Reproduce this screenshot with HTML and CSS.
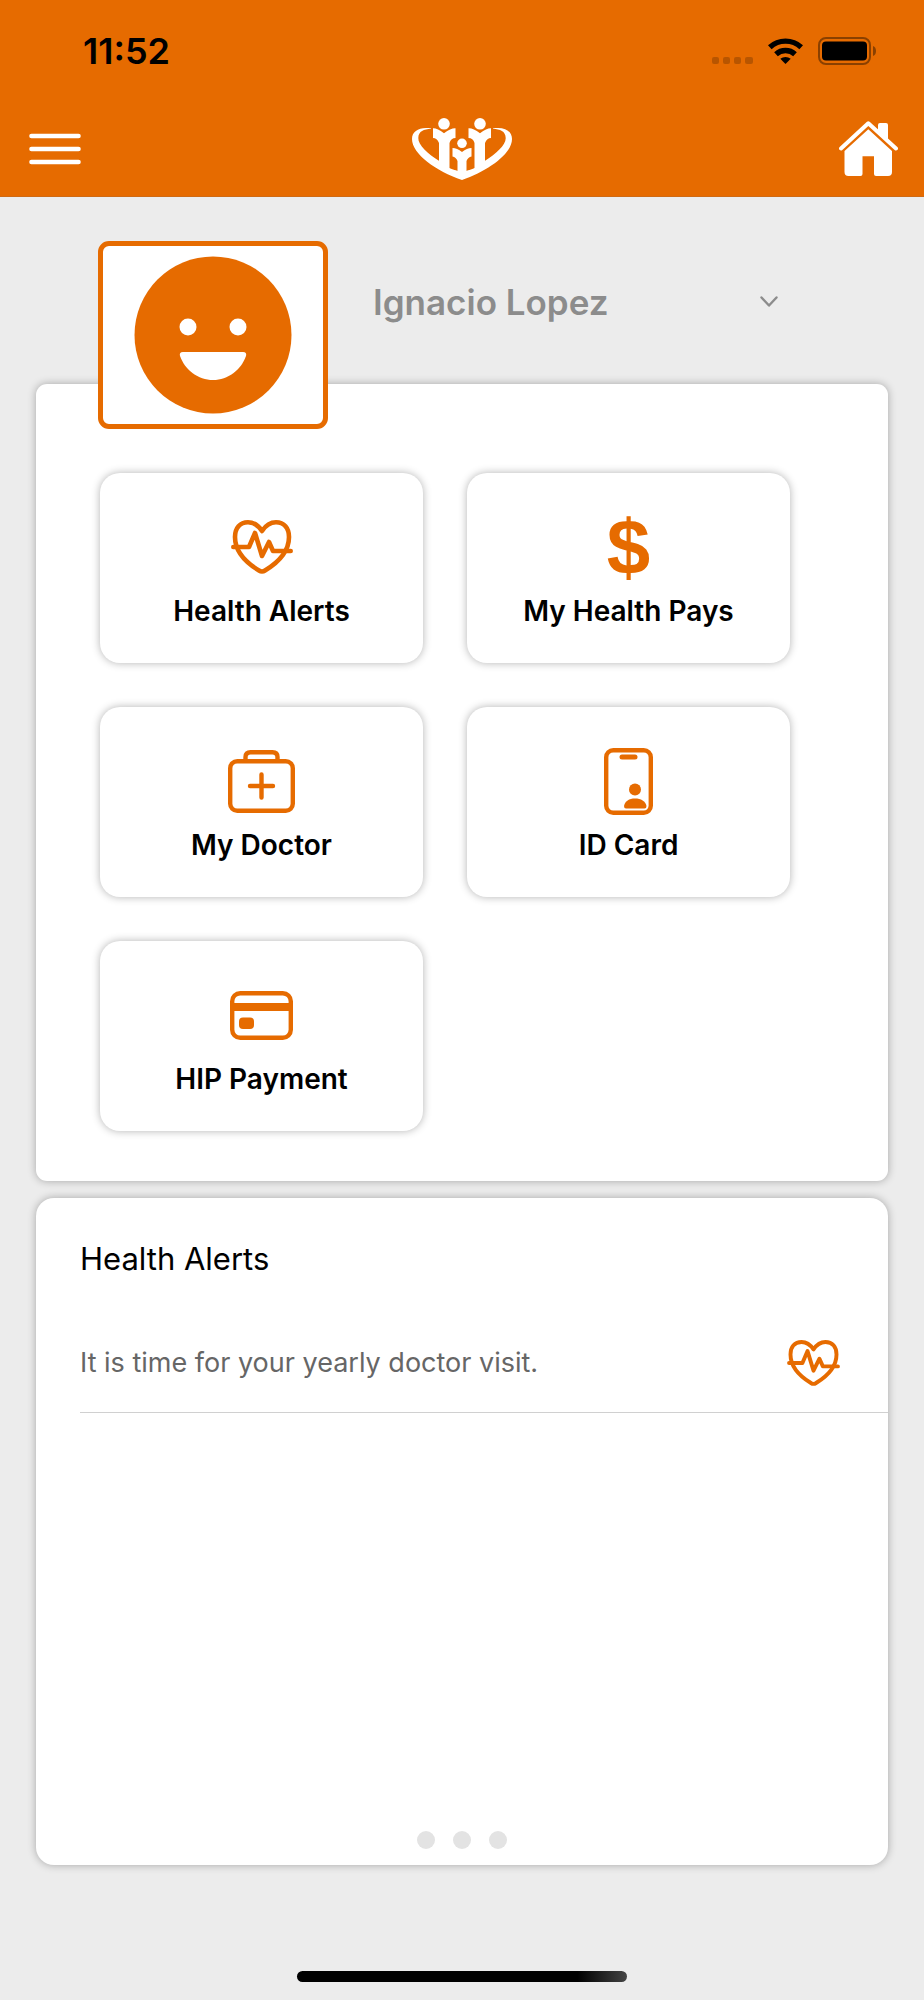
FILE: index.html
```html
<!DOCTYPE html>
<html lang="en">
<head>
<meta charset="utf-8" />
<meta name="viewport" content="width=device-width, initial-scale=1">
<title>Member Home</title>
<link rel="stylesheet" href="styles.css">
</head>

<body>
    <!-- icons that are used more than once -->
    <svg class="defs" width="0" height="0">
        <symbol id="heart" viewBox="0 0 62 54">
            <g fill="none" stroke="currentColor" stroke-width="4.6" stroke-linecap="round" stroke-linejoin="round">
                <path d="M31 11C27 5 22 2.300 17 2.300C9 2.300 4 8 4 17C4 31 14 42 28 50.500Q31 52.500 34 50.500C48 42 58 31 58 17C58 8 53 2.300 45 2.300C40 2.300 35 5 31 11Z"/>
                <path d="M2.300 27H18L24 13L31 36L38 22L42 31H59.700"/>
            </g>
        </symbol>
    </svg>

    <header class="header">
        <div class="status-bar">
            <span class="time">11:52</span>
            <div class="status-icons">
                <svg class="signal" width="41" height="8" viewBox="0 0 41 8">
                    <rect x="0" width="7" height="7" y="0" rx="2"/>
                    <rect x="11" width="7" height="7" y="0" rx="2"/>
                    <rect x="22" width="7" height="7" y="0" rx="2"/>
                    <rect x="33" width="8" height="7" y="0" rx="2"/>
                </svg>
                <svg width="35" height="26" viewBox="0 0 35 26">
                    <path d="M1.8 9.2A23.2 23.2 0 0 1 33.2 9.2M8 16.2A14 14 0 0 1 27 16.2" fill="none" stroke="#000" stroke-width="5.4"/>
                    <path d="M17.5 26L12.3 20.8A8 8 0 0 1 22.7 20.8Z"/>
                </svg>
                <svg width="58" height="28" viewBox="0 0 58 28">
                    <rect x="1" y="1" width="51" height="26" rx="7" fill="none" stroke="#000" stroke-opacity=".4" stroke-width="2"/>
                    <rect x="4" y="4.500" width="45" height="19" rx="4"/>
                    <path d="M55 9Q58 10 58 14T55 19Z" fill-opacity=".4"/>
                </svg>
            </div>
        </div>
        <nav class="nav">
            <button class="nav-button" aria-label="Menu">
                <svg width="55" height="32" viewBox="-3 0 55 32" stroke="#fff" stroke-width="4.6" stroke-linecap="round">
                    <path d="M2.5 3H49.5M2.5 16H49.5M2.5 29H49.5"/>
                </svg>
            </button>
            <svg class="logo" width="100" height="62" viewBox="0 0 100 62" fill="#fff">
                <g id="half">
                    <path d="M19 10.3C8 8.5 0 12.5 0 21C0 36 24 53 50 62V53.5C44 53 36 51 27.3 43C16 36 6 27 6.3 20C6.5 13 12 11.4 19 10.8Z"/>
                    <circle cx="32" cy="5.8" r="5.8"/>
                    <path d="M21 10.3Q25 10 32 15.2Q39 10 43.5 10.3V20Q39 20 37.5 25V52L27 46V25Q25 20 21 20Z"/>
                </g>
                <use href="#half" transform="matrix(-1 0 0 1 100 0)"/>
                <path d="M40.5 30Q45 30 50 34Q55 30 59.5 30V38.500Q56 39 54.5 43V55H45.5V43Q44 39 40.5 38.500Z"/>
                <circle cx="50" cy="25.3" r="4.8"/>
                <path d="M32 50L45 53H55L68 50L50 61Z"/>
            </svg>
            <button class="nav-button" aria-label="Home">
                <svg width="59" height="55" viewBox="0 0 59 55" fill="#fff">
                    <path d="M39 9V4Q39 2 41 2H47Q49 2 49 4V18.5Z"/>
                    <path d="M29.3 8.2L53 30V51Q53 55 49 55H37Q35 55 35 53V35.3H23.5V53Q23.5 55 21.5 55H9.5Q5.5 55 5.5 51V30Z"/>
                    <path d="M2 27.5L29.3 2.3L57 27.5" fill="none" stroke="#fff" stroke-width="4" stroke-linecap="round" stroke-linejoin="round"/>
                </svg>
            </button>
        </nav>
    </header>

    <main class="main">
        <div class="profile">
            <div class="avatar">
                <svg width="158" height="158" viewBox="0 0 158 158">
                    <circle cx="79" cy="79" r="78.5" fill="#e66b00"/>
                    <g fill="#fff">
                        <circle cx="54" cy="71" r="8.5"/>
                        <circle cx="104" cy="71" r="8.5"/>
                        <path d="M49 96H109Q113 96 112 100C107 114 94 124 79 124S51 114 46 100Q45 96 49 96Z"/>
                    </g>
                </svg>
            </div>
            <div class="member">
                <select class="member-select" aria-label="Member">
                    <option>Ignacio Lopez</option>
                </select>
                <svg class="chevron" width="18" height="12" viewBox="0 0 18 12" fill="none" stroke="#8c8c8c" stroke-width="2.4" stroke-linecap="round" stroke-linejoin="round">
                    <path d="M1.500 1.500L9 9.500L16.500 1.500"/>
                </svg>
            </div>
        </div>

        <section class="panel tiles">
            <button class="tile">
                <span class="tile-icon"><svg width="62" height="54"><use href="#heart"/></svg></span>
                Health Alerts
            </button>
            <button class="tile">
                <span class="tile-icon dollar">$</span>
                My Health Pays
            </button>
            <button class="tile">
                <span class="tile-icon">
                    <svg width="67" height="63" viewBox="0 0 67 63" fill="none" stroke="currentColor" stroke-width="4.4">
                        <rect x="2.200" y="11.200" width="62.600" height="49.600" rx="7"/>
                        <path d="M17.500 11V7Q17.500 2.200 22.500 2.200H44.500Q49.500 2.200 49.500 7V11"/>
                        <path d="M22 36H45M33.500 24.500V47.500" stroke-linecap="round"/>
                    </svg>
                </span>
                My Doctor
            </button>
            <button class="tile">
                <span class="tile-icon">
                    <svg width="49" height="67" viewBox="0 0 49 67" fill="currentColor">
                        <rect x="2.200" y="2.200" width="44.600" height="62.600" rx="7" fill="none" stroke="currentColor" stroke-width="4.4"/>
                        <rect x="15.500" y="6.500" width="18" height="5" rx="2.500"/>
                        <circle cx="31" cy="41.500" r="6"/>
                        <path d="M22 60.500Q20 60.500 20 58C21 53 25 50.500 31 50.500S41.500 53 42.500 58Q42.500 60.500 40.500 60.500Z"/>
                    </svg>
                </span>
                ID Card
            </button>
            <button class="tile">
                <span class="tile-icon">
                    <svg width="63" height="49" viewBox="0 0 63 49" fill="currentColor">
                        <rect x="2.200" y="2.200" width="58.600" height="44.600" rx="8" fill="none" stroke="currentColor" stroke-width="4.4"/>
                        <rect x="3" y="12" width="57" height="8"/>
                        <rect x="9" y="26.500" width="15" height="11.500" rx="4"/>
                    </svg>
                </span>
                HIP Payment
            </button>
        </section>

        <section class="panel alerts">
            <h2 class="alerts-title">Health Alerts</h2>
            <div class="alert">
                <p class="alert-text">It is time for your yearly doctor visit.</p>
                <svg class="alert-icon" width="53" height="46"><use href="#heart"/></svg>
            </div>
            <div class="dots">
                <span class="dot"></span>
                <span class="dot"></span>
                <span class="dot"></span>
            </div>
        </section>
    </main>

    <div class="home-indicator"></div>
</body>
</html>
```

FILE: styles.css
```css
* {
    box-sizing: border-box;
}
body {
    margin: 0px;
    min-height: 100vh;
    display: flex;
    flex-direction: column;
    background: #ececec;
    color: #000;
    font-family: Inter, "Liberation Sans", sans-serif;
}
svg {
    display: block;
}
button {
    border: none;
    background: none;
    padding: 0px;
    font-family: inherit;
    color: inherit;
}
.defs {
    position: absolute;
}

/* header */
.header {
    background: #e66b00;
    border-bottom: 1px solid #cf6a14;
}
.status-bar {
    height: 101px;
    padding: 0px 48px 0px 83px;
    display: flex;
    align-items: center;
    justify-content: space-between;
}
.time {
    font-size: 36px;
    font-weight: 600;
}
.status-icons {
    display: flex;
    align-items: center;
    gap: 15px;
}
.signal {
    align-self: flex-end;
    fill: #000;
    fill-opacity: .2;
}
.nav {
    height: 95px;
    padding: 0px 26px;
    display: grid;
    grid-template-columns: 1fr auto 1fr;
    align-items: center;
}
.nav-button {
    justify-self: start;
}
.nav-button:last-child {
    justify-self: end;
}

/* content */
.main {
    flex: 1;
    display: flex;
    flex-direction: column;
    padding: 44px 36px 0px;
}
.profile {
    display: flex;
    padding-left: 62px;
    margin-bottom: -45px;
    z-index: 1;
}
.avatar {
    width: 230px;
    height: 188px;
    display: flex;
    align-items: center;
    justify-content: center;
    background: #fff;
    border: 5px solid #e66b00;
    border-radius: 11px;
}
.member {
    flex: 1;
    height: 121px;
    margin: 0px 106px 0px 45px;
    display: grid;
    align-items: center;
}
.member-select,
.chevron {
    grid-area: 1 / 1;
}
.member-select {
    appearance: none;
    width: 100%;
    padding: 0px;
    border: none;
    background: none;
    color: #8c8c8c;
    font-family: inherit;
    font-size: 35px;
    font-weight: 600;
}
.chevron {
    justify-self: end;
    margin-right: 4px;
    pointer-events: none;
}
.panel {
    background: #fff;
    box-shadow: 0px 0px 8px rgba(0,0,0,0.3);
}
.tiles {
    padding: 89px 98px 50px 64px;
    border-radius: 11px;
    display: grid;
    grid-template-columns: 1fr 1fr;
    gap: 44px;
}
.tile {
    padding: 39px 0px 36px;
    display: flex;
    flex-direction: column;
    align-items: center;
    gap: 13px;
    background: #fff;
    border-radius: 20px;
    box-shadow: 0px 0px 8px rgba(0,0,0,0.3);
    font-size: 28px;
    font-weight: 600;
    line-height: 32px;
}
.tile-icon {
    height: 70px;
    display: flex;
    align-items: center;
    color: #e66b00;
}
.dollar {
    font-family: "Liberation Sans", sans-serif;
    font-size: 78px;
    font-weight: bold;
}

/* alerts */
.alerts {
    flex: 1;
    margin-top: 17px;
    padding: 41px 0px 16px 44px;
    border-radius: 18px;
    display: flex;
    flex-direction: column;
}
.alerts-title {
    margin: 0px;
    font-size: 31px;
    font-weight: 400;
    line-height: 40px;
}
.alert {
    height: 134px;
    padding: 34px 48px 0px 0px;
    display: flex;
    align-items: center;
    justify-content: space-between;
    border-bottom: 1px solid #d0d0d0;
}
.alert-text {
    margin: 0px;
    color: #666;
    font-size: 27px;
    line-height: 32px;
}
.alert-icon {
    color: #e66b00;
}
.dots {
    margin-top: auto;
    padding-right: 44px;
    display: flex;
    justify-content: center;
    gap: 18px;
}
.dot {
    width: 18px;
    height: 18px;
    border-radius: 50%;
    background: #e3e3e3;
}
.home-indicator {
    width: 330px;
    height: 11px;
    margin: 106px auto 18px;
    border-radius: 6px;
    background: linear-gradient(to right, #000 85%, #444);
}
```
